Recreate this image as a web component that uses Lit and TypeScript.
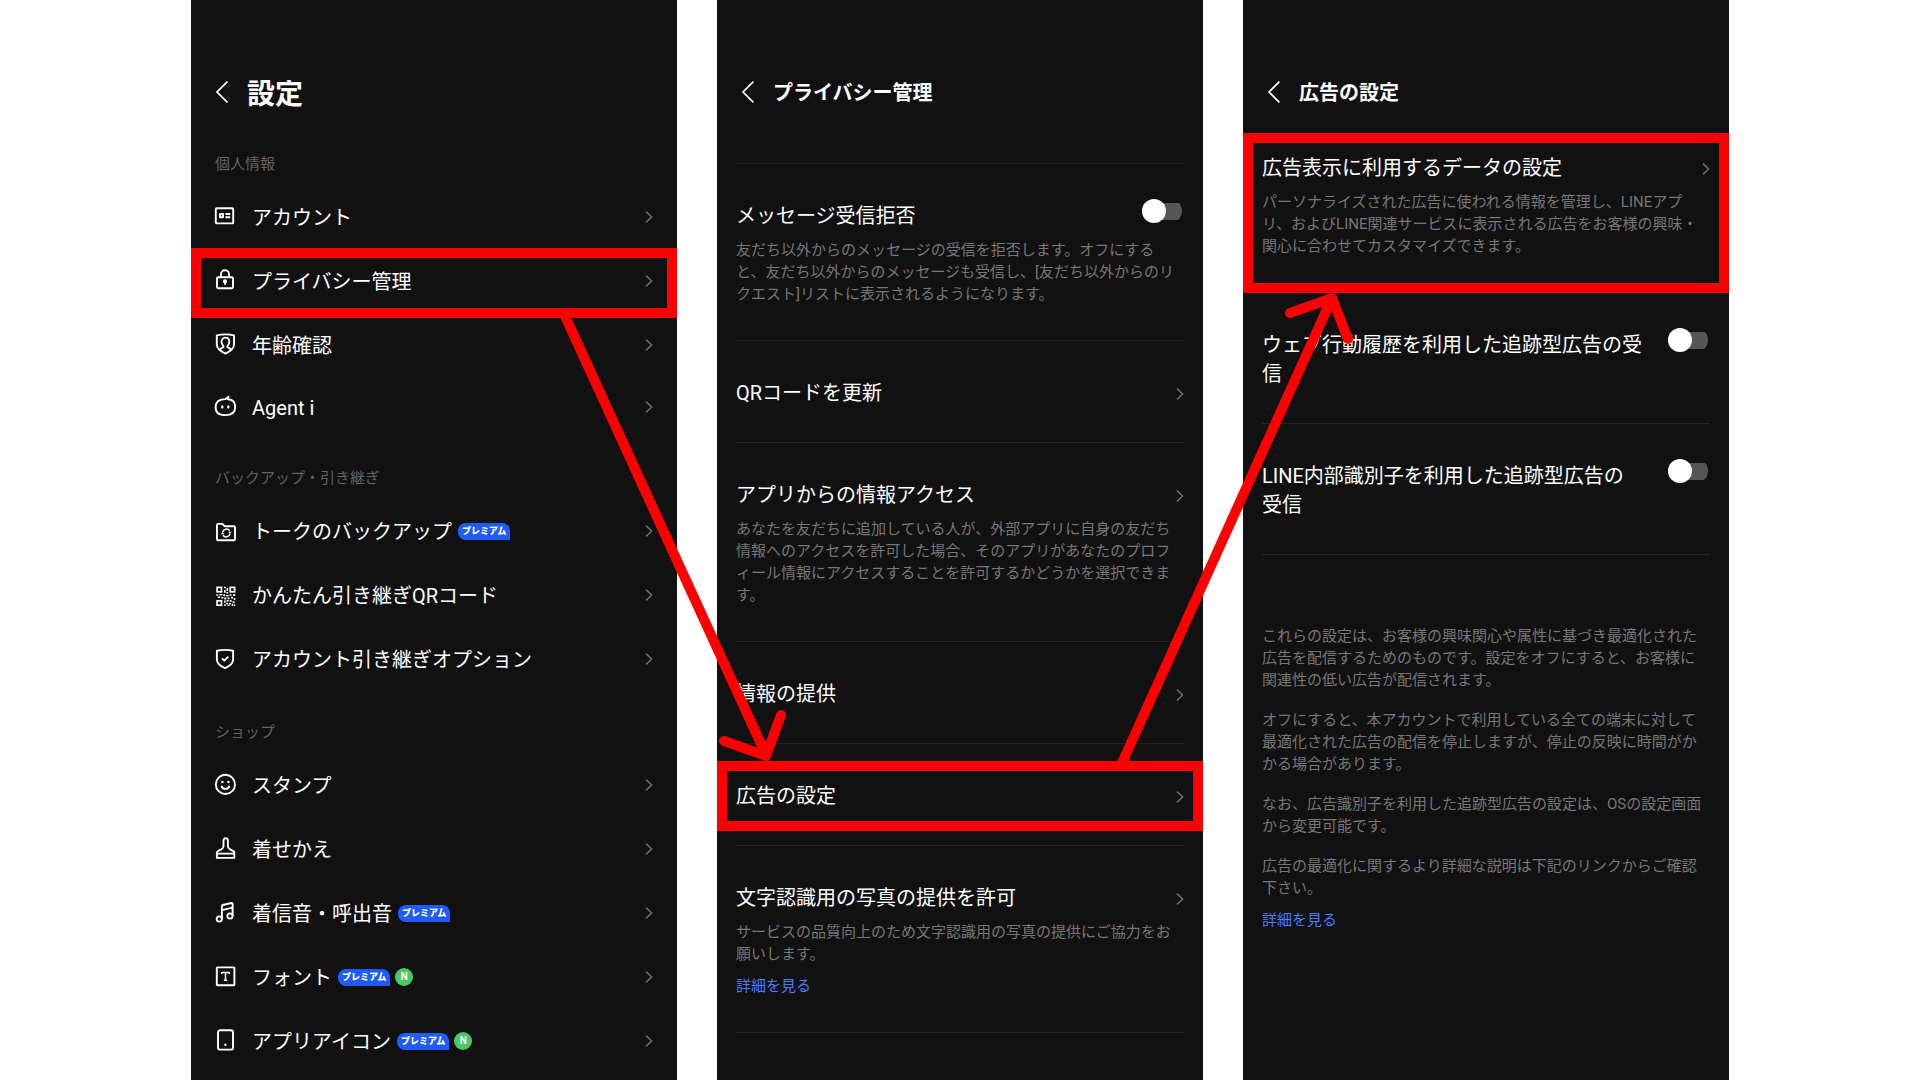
import { LitElement, html, svg, css, nothing, TemplateResult, SVGTemplateResult } from "lit";
import { customElement, property } from "lit/decorators.js";
import { classMap } from "lit/directives/class-map.js";

const icons: Record<string, SVGTemplateResult> = {
  account: svg`
    <rect x="1.8" y="3.2" width="17.4" height="15.2" rx="1"/>
    <rect x="6" y="9" width="3" height="3.2"/>
    <path d="M11.4 9h4.8M11.4 12.2h4.8"/>`,
  lock: svg`
    <rect x="3" y="8.3" width="16" height="11" rx="1.2"/>
    <path d="M6.9 8.3V5.4a4.1 4.1 0 0 1 8.2 0v2.9M11 13v2.8"/>
    <circle cx="11" cy="12.4" r="1.1" fill="currentColor"/>`,
  person: svg`
    <path d="M11.4 1.4c3 0 5.900.3 8.600 1v9.200c0 4-3.700 6.900-8.600 9-4.900-2.100-8.600-5-8.600-9V2.400c2.700-.7 5.600-1 8.600-1z"/>
    <path d="M5.600 17c1-1.900 2.300-2.300 3.600-2.800.4-.2.4-.9 0-1.300C8 11.700 7.500 10.300 7.500 8.800c0-2.400 1.600-4.200 3.900-4.200s3.900 1.800 3.900 4.200c0 1.500-.5 2.900-1.700 4.100-.4.400-.4 1.100 0 1.300 1.300.5 2.600.9 3.600 2.800"/>`,
  agent: svg`
    <path d="M11.500 4.100 14.600 1.800l-.8 2.400c4.700.2 7.400 2.700 7.400 7.700 0 5.800-3 8.200-9.800 8.200S1.600 17.700 1.600 11.900c0-5.400 3.200-7.800 9.900-7.800z"/>
    <ellipse cx="8.300" cy="12" rx=".9" ry="1.400" fill="currentColor" stroke-width=".6"/>
    <ellipse cx="14.300" cy="12" rx=".9" ry="1.400" fill="currentColor" stroke-width=".6"/>`,
  folder: svg`
    <path d="M3 5.900c0-.6.400-1 1-1h4.300l2.200 2.300H20c.6 0 1 .4 1 1v12c0 .6-.4 1-1 1H4c-.6 0-1-.4-1-1z"/>
    <path d="M8.600 13.200a3.900 3.900 0 0 1 7-1.400M16 14.800a3.900 3.900 0 0 1-7 1.400" stroke-width="1.500"/>
    <path d="M14.200 12.800h3.400l-1.700 2.100zM10.400 15.200H7l1.700-2.100z" fill="currentColor" stroke="none"/>`,
  qr: svg`
    <g stroke-width="1.700" stroke-linejoin="miter">
      <rect x="3.100" y="4.400" width="4.400" height="4.400"/>
      <rect x="16.200" y="4.400" width="4.400" height="4.400"/>
      <rect x="3.100" y="17.800" width="4.400" height="4.400"/>
    </g>
    <path stroke="none" fill="currentColor" d="M10 3.700h2v1.600h-2zM12.500 5h1.600v3h-1.600zM10 7h1.600v2.800H10zM12.300 9h2v1.500h-2zM2.300 11.300h2v1.500h-2zM5.400 11h3v1.600h-3zM9.400 11.200h1.700v2H9.400zM12.200 12h2.400v1.500h-2.400zM15.500 11.200h2v1.600h-2zM19.200 11h2v2h-2zM3.800 13.500h2.400V15H3.800zM7.400 13.900h2v1.600h-2zM10.300 14.500h2v1.900h-2zM13.600 14.500h2v1.700h-2zM17 13.800h2v1.800h-2zM19.700 15h1.600v1.900h-1.600zM10.100 17.500h1.600v2.300h-1.600zM12.500 16.900h2.200v1.500h-2.200zM15.600 17.200h2.200v1.500h-2.200zM18.500 18.200h2.200v1.500h-2.200zM12.200 19.700h2v1.500h-2zM14.900 19.900h2v1.600h-2zM17.600 20.700h1.800v2h-1.800zM10.100 21.200h1.600v1.800h-1.600zM13.500 21.700h2V23h-2zM20 21.500h1.300V23H20z"/>`,
  shield: svg`
    <path d="M11 2.900c2.800 0 5.500.3 8.100.9v9c0 4-3.500 6.300-8.100 8.400-4.600-2.100-8.100-4.400-8.100-8.400v-9c2.600-.6 5.300-.9 8.100-.9z"/>
    <path d="m8 11.400 2.300 2.300 4-4"/>`,
  smile: svg`
    <circle cx="11.400" cy="11.400" r="9.600"/>
    <path d="M7.400 12.700a4.100 4.100 0 0 0 8 0"/>
    <circle cx="8.400" cy="9" r="1.200" fill="currentColor" stroke="none"/>
    <circle cx="14.400" cy="9" r="1.200" fill="currentColor" stroke="none"/>`,
  brush: svg`
    <path d="M2.900 20.900v-5.200c0-.8.300-1.200 1-1.600l3.700-2c1.300-.7 1.900-1.500 1.900-2.900V3.400a2.200 2.200 0 0 1 4.400 0v5.800c0 1.400.6 2.200 1.900 2.900l3.500 2c.7.400 1 .8 1 1.600v5.200zM2.900 16.600h17.400"/>`,
  music: svg`
    <circle cx="5.300" cy="18" r="2.600"/>
    <circle cx="16" cy="15" r="2.600"/>
    <path d="M7.900 18V5.200c0-.6.300-1 .9-1.200l8.600-2c.7-.2 1.200.1 1.200.8V15M7.900 9.200l10.700-2.600"/>`,
  type: svg`
    <rect x="2.800" y="2.400" width="17.600" height="17.800" rx=".6"/>
    <path d="M7.700 9V7.500h7.600V9M11.500 7.500v7.600M9.900 15.200h3.200" stroke-width="1.500"/>`,
  phone: svg`
    <rect x="4" y="1.200" width="15" height="19.400" rx="2.200"/>
    <circle cx="11.400" cy="15.800" r="1.200" fill="currentColor" stroke="none"/>`,
};

const shared = css`
  * {
    box-sizing: border-box;
    margin: 0;
  }
  a {
    color: inherit;
    text-decoration: none;
  }
  .chevron {
    flex: none;
    width: 8px;
    height: 12px;
    fill: none;
    stroke: #6e6e6e;
    stroke-width: 1.5;
  }
`;

const chevron = html`<svg class="chevron" viewBox="0 0 8 12" aria-hidden="true">
  <path d="M1 .6 6.600 6 1 11.400" />
</svg>`;

@customElement("screen-header")
export class ScreenHeader extends LitElement {
  @property() heading = "";
  @property({ type: Boolean }) large = false;

  static styles = [
    shared,
    css`
      :host {
        display: block;
      }
      header {
        display: flex;
        align-items: center;
        gap: 16px;
        padding: 64px 20px 0;
        height: 120px;
      }
      button {
        display: flex;
        padding: 0;
        border: 0;
        background: none;
        color: #fff;
      }
      svg {
        width: 20px;
        height: 24px;
        fill: none;
        stroke: currentColor;
        stroke-width: 1.7;
      }
      h1 {
        padding-top: 2px;
        font-size: 20px;
        line-height: 40px;
        font-weight: 700;
        color: #fff;
      }
      .large {
        padding-top: 5px;
        font-size: 28px;
      }
    `,
  ];

  render() {
    return html`<header>
      <button type="button" aria-label="戻る">
        <svg viewBox="0 0 20 24" aria-hidden="true"><path d="M16.400 1.600 6 12l10.400 10.400" /></svg>
      </button>
      <h1 class=${classMap({ large: this.large })}>${this.heading}</h1>
    </header>`;
  }
}

interface MenuItem {
  icon: string;
  text: string;
  premium?: boolean;
  fresh?: boolean;
  marked?: boolean;
  compact?: boolean;
}

const groups: { label: string; items: MenuItem[] }[] = [
  {
    label: "個人情報",
    items: [
      { icon: "account", text: "アカウント" },
      { icon: "lock", text: "プライバシー管理", marked: true },
      { icon: "person", text: "年齢確認" },
      { icon: "agent", text: "Agent i", compact: true },
    ],
  },
  {
    label: "バックアップ・引き継ぎ",
    items: [
      { icon: "folder", text: "トークのバックアップ", premium: true },
      { icon: "qr", text: "かんたん引き継ぎQRコード" },
      { icon: "shield", text: "アカウント引き継ぎオプション" },
    ],
  },
  {
    label: "ショップ",
    items: [
      { icon: "smile", text: "スタンプ" },
      { icon: "brush", text: "着せかえ" },
      { icon: "music", text: "着信音・呼出音", premium: true },
      { icon: "type", text: "フォント", premium: true, fresh: true },
      { icon: "phone", text: "アプリアイコン", premium: true, fresh: true },
    ],
  },
];

@customElement("settings-menu")
export class SettingsMenu extends LitElement {
  static styles = [
    shared,
    css`
      :host {
        display: block;
        padding-top: 3px;
      }
      h2 {
        padding: 29px 24px 9px;
        font-size: 15px;
        line-height: 24px;
        font-weight: 400;
        color: #626262;
      }
      ul {
        padding: 0;
        list-style: none;
      }
      .item {
        position: relative;
        display: flex;
        align-items: center;
        height: 64px;
        padding: 0 24px 0 23px;
        font-size: 20px;
        line-height: 24px;
        color: #fff;
      }
      .compact {
        height: 60px;
      }
      .marked::after {
        content: "";
        position: absolute;
        inset: -1px 0 -5px;
        border: 10px solid #f00;
      }
      .icon {
        flex: none;
        width: 24px;
        height: 24px;
        margin-right: 14px;
        fill: none;
        stroke: currentColor;
        stroke-width: 1.9;
        stroke-linejoin: round;
      }
      .text {
        padding-top: 2px;
      }
      .premium {
        margin-left: 6px;
        padding: 0 4px;
        border-radius: 8px 8px 0 8px;
        background: #1f5bff;
        font-size: 9px;
        line-height: 17px;
        font-weight: 900;
      }
      .fresh {
        width: 18px;
        margin-left: 5px;
        border-radius: 50%;
        background: #4cc764;
        font-size: 10px;
        line-height: 18px;
        font-weight: 700;
        text-align: center;
      }
      .chevron {
        margin-left: auto;
      }
    `,
  ];

  render() {
    return groups.map(
      (g) => html`<section>
        <h2>${g.label}</h2>
        <ul>
          ${g.items.map(
            (i) => html`<li>
              <a
                href="#"
                class=${classMap({ item: true, marked: !!i.marked, compact: !!i.compact })}
              >
                <svg class="icon" viewBox="0 0 24 24" aria-hidden="true">${icons[i.icon]}</svg>
                <span class="text">${i.text}</span>
                ${i.premium ? html`<span class="premium">プレミアム</span>` : nothing}
                ${i.fresh ? html`<span class="fresh">N</span>` : nothing}
                ${chevron}
              </a>
            </li>`
          )}
        </ul>
      </section>`
    );
  }
}

interface Option {
  title: string | TemplateResult;
  text?: string;
  link?: boolean;
  toggle?: boolean;
  marked?: "row" | "card";
}

const privacyOptions: Option[] = [
  {
    title: "メッセージ受信拒否",
    text: "友だち以外からのメッセージの受信を拒否します。オフにすると、友だち以外からのメッセージも受信し、[友だち以外からのリクエスト]リストに表示されるようになります。",
    toggle: true,
  },
  { title: "QRコードを更新" },
  {
    title: "アプリからの情報アクセス",
    text: "あなたを友だちに追加している人が、外部アプリに自身の友だち情報へのアクセスを許可した場合、そのアプリがあなたのプロフィール情報にアクセスすることを許可するかどうかを選択できます。",
  },
  { title: "情報の提供" },
  { title: "広告の設定", marked: "row" },
  {
    title: "文字認識用の写真の提供を許可",
    text: "サービスの品質向上のため文字認識用の写真の提供にご協力をお願いします。",
    link: true,
  },
];

const adOptions: Option[] = [
  {
    title: "広告表示に利用するデータの設定",
    text: "パーソナライズされた広告に使われる情報を管理し、LINEアプリ、およびLINE関連サービスに表示される広告をお客様の興味・関心に合わせてカスタマイズできます。",
    marked: "card",
  },
  { title: "ウェブ行動履歴を利用した追跡型広告の受信", toggle: true },
  {
    title: html`LINE内部識別子を利用した追跡型広告の<span class="word">受信</span>`,
    toggle: true,
  },
];

const adNotes = [
  "これらの設定は、お客様の興味関心や属性に基づき最適化された広告を配信するためのものです。設定をオフにすると、お客様に関連性の低い広告が配信されます。",
  "オフにすると、本アカウントで利用している全ての端末に対して最適化された広告の配信を停止しますが、停止の反映に時間がかかる場合があります。",
  "なお、広告識別子を利用した追跡型広告の設定は、OSの設定画面から変更可能です。",
  "広告の最適化に関するより詳細な説明は下記のリンクからご確認下さい。",
];

@customElement("option-list")
export class OptionList extends LitElement {
  @property({ attribute: false }) options: Option[] = [];
  @property({ attribute: false }) notes: string[] = [];

  static styles = [
    shared,
    css`
      :host {
        display: block;
      }
      .option {
        position: relative;
        padding: 0 19px;
      }
      .body {
        padding: 35px 0;
        border-top: 1px solid #242424;
      }
      .option.card .body {
        border-top-color: transparent;
      }
      .end {
        margin: 0 19px;
        border-top: 1px solid #242424;
      }
      .marked::after {
        content: "";
        position: absolute;
        z-index: 1;
        inset: 18px 0 14px;
        border: 10px solid #f00;
        pointer-events: none;
      }
      .card::after {
        inset: 18px 0 -1px;
      }
      .head {
        display: flex;
        align-items: flex-start;
        justify-content: space-between;
        gap: 16px;
        color: #fff;
      }
      .title {
        margin-bottom: -1px;
        padding-top: 3px;
        font-size: 20px;
        line-height: 29px;
      }
      .word {
        white-space: nowrap;
      }
      .head .chevron {
        margin-top: 12px;
      }
      p,
      .more {
        font-size: 15px;
        line-height: 22px;
        color: #777;
      }
      .head + p {
        margin-top: 9px;
        padding-right: 8px;
      }
      .more {
        display: block;
        width: fit-content;
        margin-top: 10px;
        color: #4c7bff;
      }
      .switch {
        flex: none;
        appearance: none;
        display: flex;
        align-items: center;
        width: 40px;
        height: 24px;
        margin: 0 2px 0 0;
        background: linear-gradient(#555, #555) center / 40px 17px no-repeat;
        border-radius: 12px;
      }
      .switch::before {
        content: "";
        width: 24px;
        height: 24px;
        border-radius: 50%;
        background: #fff;
      }
      .switch:checked {
        justify-content: flex-end;
      }
      .notes {
        display: grid;
        gap: 18px;
        padding: 70px 19px 0;
      }
      .notes .more {
        margin-top: -8px;
      }
    `,
  ];

  render() {
    return html`
      ${this.options.map((o, n) => {
        const cls = { option: true, marked: !!o.marked, card: o.marked === "card" };
        return html`<section class=${classMap(cls)}>
          <div class="body">
            ${o.toggle
              ? html`<div class="head">
                  <label class="title" for="s${n}">${o.title}</label>
                  <input class="switch" id="s${n}" type="checkbox" role="switch" />
                </div>`
              : html`<a class="head" href="#"><span class="title">${o.title}</span>${chevron}</a>`}
            ${o.text ? html`<p>${o.text}</p>` : nothing}
            ${o.link ? html`<a class="more" href="#">詳細を見る</a>` : nothing}
          </div>
        </section>`;
      })}
      <div class="end"></div>
      ${this.notes.length
        ? html`<div class="notes">
            ${this.notes.map((t) => html`<p>${t}</p>`)}
            <a class="more" href="#">詳細を見る</a>
          </div>`
        : nothing}
    `;
  }
}

@customElement("app-root")
export class AppRoot extends LitElement {
  static styles = [
    shared,
    css`
      :host {
        display: block;
        min-height: 100vh;
        background: #fff;
        font-family: Roboto, "Noto Sans CJK JP", sans-serif;
      }
      main {
        position: relative;
        display: grid;
        grid-template-columns: repeat(3, minmax(0, 1fr));
        gap: 40px;
        max-width: 1538px;
        min-height: 100vh;
        margin: 0 auto;
      }
      .screen {
        background: #111;
      }
      .privacy {
        display: grid;
        align-content: start;
        gap: 43px;
      }
      .ads option-list {
        margin-top: -5px;
      }
      .arrows {
        position: absolute;
        z-index: 2;
        top: 0;
        left: 0;
        width: 100%;
        fill: none;
        stroke: #f00;
        stroke-width: 10;
        stroke-linejoin: round;
        pointer-events: none;
      }
      .tips {
        stroke-linecap: round;
      }
    `,
  ];

  render() {
    return html`<main lang="ja">
      <section class="screen">
        <screen-header heading="設定" large></screen-header>
        <settings-menu></settings-menu>
      </section>
      <section class="screen privacy">
        <screen-header heading="プライバシー管理"></screen-header>
        <option-list .options=${privacyOptions}></option-list>
      </section>
      <section class="screen ads">
        <screen-header heading="広告の設定"></screen-header>
        <option-list .options=${adOptions} .notes=${adNotes}></option-list>
      </section>
      <svg class="arrows" viewBox="0 0 1538 1080" aria-hidden="true">
        <path d="M374 316 575 755M931 763 1141 298" />
        <path class="tips" d="M533 741 575 756 590 715M1099 313 1141 298 1157 339" />
      </svg>
    </main>`;
  }
}
